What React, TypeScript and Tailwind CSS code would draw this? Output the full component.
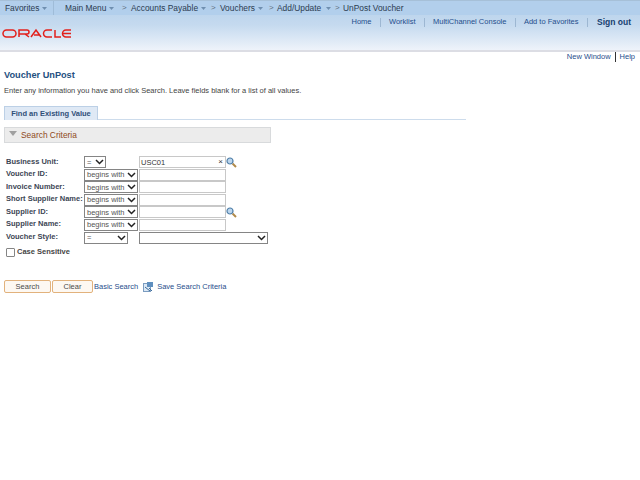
const linkText = "text-[#1f4e8c]";

function Chevron({ className = "" }: { className?: string }) {
  return (
    <svg width="9" height="6" viewBox="0 0 9 6" className={`shrink-0 ${className}`}>
      <path d="M1 1l3.5 3.5L8 1" fill="none" stroke="#222" strokeWidth="1.5" />
    </svg>
  );
}

function Drop() {
  return (
    <svg width="5" height="3" viewBox="0 0 5 3" className="mt-[1px] shrink-0">
      <path d="M0 0h5L2.5 3z" fill="#6f8fb0" />
    </svg>
  );
}

function Crumb() {
  return <span className="text-[#5f6f80] text-[8px] leading-none w-[5px]">&gt;</span>;
}

function Lens() {
  return (
    <svg width="11" height="11" viewBox="0 0 11 11">
      <path d="M6.5 6.5l3.5 3.5" stroke="#b08a4a" strokeWidth="2" />
      <circle cx="4" cy="4" r="3" fill="#bcd6ee" stroke="#4f7fa8" strokeWidth="1.2" />
    </svg>
  );
}

function Select({ label, w }: { label: string; w: string }) {
  return (
    <div className={`${w} h-[12px] border border-[#858585] bg-white flex items-center justify-between pl-[2px] pr-[1px] text-[7.5px] text-[#555] whitespace-nowrap`}>
      <span>{label}</span>
      <Chevron />
    </div>
  );
}

function TextBox({ value, clear }: { value?: string; clear?: boolean }) {
  return (
    <div className="w-[87px] h-[12px] border border-[#c8c8c8] bg-white flex items-center justify-between px-[1px] text-[7.5px] text-[#333]">
      <span>{value}</span>
      {clear && <span className="text-[8px] leading-none mr-[1px]">×</span>}
    </div>
  );
}

const rows = [
  { label: "Business Unit:", op: "=", opW: "w-[22px]", value: "USC01", clear: true, lens: true },
  { label: "Voucher ID:", op: "begins with", opW: "w-[54px]" },
  { label: "Invoice Number:", op: "begins with", opW: "w-[54px]" },
  { label: "Short Supplier Name:", op: "begins with", opW: "w-[54px]" },
  { label: "Supplier ID:", op: "begins with", opW: "w-[54px]", lens: true },
  { label: "Supplier Name:", op: "begins with", opW: "w-[54px]" },
];

function Row({ label, op, opW, value, clear, lens }: (typeof rows)[number]) {
  return (
    <div className="flex items-center h-[12.5px]">
      <div className="w-[80px] pl-[2px] font-bold text-[#3c4654] text-[7.5px] whitespace-nowrap -mt-[2px]">{label}</div>
      <div className="w-[55px]">
        <Select label={op} w={opW} />
      </div>
      <TextBox value={value} clear={clear} />
      {lens && <Lens />}
    </div>
  );
}

export default function App() {
  return (
    <div className="w-[640px] h-[480px] bg-white overflow-hidden font-['Liberation_Sans',Arial,sans-serif]">
      <header className="h-[52px] bg-gradient-to-b from-[#b4cfea] via-[#c5daef] to-[#eef3fa] border-b-2 border-[#dcdde4]">
        <nav className="h-[15px] bg-[#b2cfec] flex items-center text-[8.4px] text-[#2c3c50] border-t border-[#a6c0d8] whitespace-nowrap">
          <div className="w-[54px] h-full pl-[5px] flex items-center gap-[3px] border-r border-[#9fbcd8]">
            Favorites <Drop />
          </div>
          <div className="pl-[11px] flex items-center">
            <span className="w-[44px]">Main Menu</span>
            <Drop />
            <span className="w-[8px]" />
            <Crumb />
            <span className="w-[4px]" />
            <span className="w-[70px]">Accounts Payable</span>
            <Drop />
            <span className="w-[5px]" />
            <Crumb />
            <span className="w-[4px]" />
            <span className="w-[38px]">Vouchers</span>
            <Drop />
            <span className="w-[6px]" />
            <Crumb />
            <span className="w-[3px]" />
            <span className="w-[49px]">Add/Update</span>
            <Drop />
            <span className="w-[4px]" />
            <Crumb />
            <span className="w-[3px]" />
            <span>UnPost Voucher</span>
          </div>
        </nav>
        <div className="flex justify-between">
          <svg width="72" height="12" viewBox="0 0 72 12" className="ml-[2px] mt-[13px]">
            <g fill="none" stroke="#e2201c" strokeWidth="1.5">
              <rect x="1" y="2" width="13" height="7" rx="3.5" />
              <path d="M17 9V2h8a2 2 0 0 1 0 4h-8M23 6l4 3" />
              <path d="M29 9l5-7 5 7M32 7h5" />
              <path d="M50 2h-5a3.5 3.5 0 0 0 0 7h5" />
              <path d="M53 2v7h6" />
              <path d="M69 2h-5a3.5 3.5 0 0 0 0 7h5M61 5.5h8" />
            </g>
          </svg>
          <div className={`flex items-center h-[12px] mt-[1px] mr-[9px] text-[7.5px] whitespace-nowrap ${linkText}`}>
            <span>Home</span>
            <span className="w-px h-[9px] bg-[#9db7d2] mx-[8.25px]" />
            <span>Worklist</span>
            <span className="w-px h-[9px] bg-[#9db7d2] mx-[8.25px]" />
            <span>MultiChannel Console</span>
            <span className="w-px h-[9px] bg-[#9db7d2] mx-[8.25px]" />
            <span>Add to Favorites</span>
            <span className="w-px h-[9px] bg-[#9db7d2] mx-[8.25px]" />
            <span className="font-bold text-[8.5px] text-[#17406f] ml-[1px]">Sign out</span>
          </div>
        </div>
      </header>

      <div className="flex justify-end items-center h-[12px] mt-[-1px] pr-[5px] text-[7.5px] text-[#1f4e8c] whitespace-nowrap">
        <span>New Window</span>
        <span className="w-px h-[10px] bg-[#333] mx-[4px]" />
        <span>Help</span>
      </div>

      <h1 className="mt-[5px] pl-[4px] text-[9.2px] leading-[14px] font-bold text-[#24507f]">Voucher UnPost</h1>
      <p className="mt-[3px] pl-[4px] text-[7.5px] leading-[11px] text-[#444] whitespace-nowrap">
        Enter any information you have and click Search. Leave fields blank for a list of all values.
      </p>

      <div className="mt-[10px] ml-[4px] w-[462px] border-b border-[#cddcec] h-[14px]">
        <div className="w-[94px] h-[14px] bg-[#dfe9f5] border border-b-0 border-[#bcd0e6] flex items-center justify-center text-[7.5px] font-bold text-[#2f4f78] whitespace-nowrap">
          Find an Existing Value
        </div>
      </div>

      <div className="mt-[7px] ml-[4px] w-[267px] h-[16px] bg-[#ececec] border border-[#d8dadc] flex items-center pl-[4px] gap-[4px]">
        <svg width="8" height="6" viewBox="0 0 8 6" className="-mt-[3px]">
          <path d="M0 0h8L4 5z" fill="#a0a0a0" />
        </svg>
        <span className="text-[8.4px] text-[#8f4a1c] whitespace-nowrap">Search Criteria</span>
      </div>

      <form className="mt-[13px] ml-[4px]">
        {rows.map((r) => (
          <Row key={r.label} {...r} />
        ))}
        <div className="flex items-center h-[13px]">
          <div className="w-[80px] pl-[2px] font-bold text-[#3c4654] text-[7.5px] -mt-[2px]">Voucher Style:</div>
          <div className="w-[55px]">
            <Select label="=" w="w-[44px]" />
          </div>
          <Select label="" w="w-[129px]" />
        </div>
        <label className="flex items-center mt-[2px] ml-[2px] gap-[2px] text-[7.5px] font-bold text-[#444] h-[12px]">
          <span className="w-[9px] h-[9px] border border-[#858585] bg-white rounded-[1px]" />
          Case Sensitive
        </label>
      </form>

      <div className="mt-[22px] ml-[4px] flex items-center text-[7.5px] text-[#1f4e8c] whitespace-nowrap">
        <button type="button" className="w-[47px] h-[13px] border border-[#e2b27c] rounded-[2px] bg-[#fdf8f2] text-[#4a4a4a] flex items-center justify-center mr-[1px]">
          Search
        </button>
        <button type="button" className="w-[41px] h-[13px] border border-[#e2b27c] rounded-[2px] bg-[#fdf8f2] text-[#4a4a4a] flex items-center justify-center mr-[1px]">
          Clear
        </button>
        <span>Basic Search</span>
        <svg width="11" height="12" viewBox="0 0 11 12" className="ml-[5px] mr-[3px]">
          <rect x="0.5" y="2.5" width="7" height="8" fill="#dbe8f5" stroke="#7b9cc0" />
          <path d="M4 1h6v5H4z" fill="#5f8fbf" />
          <path d="M2 6l5 4M6 7l3 3" stroke="#3b6a99" />
        </svg>
        <span>Save Search Criteria</span>
      </div>
    </div>
  );
}
